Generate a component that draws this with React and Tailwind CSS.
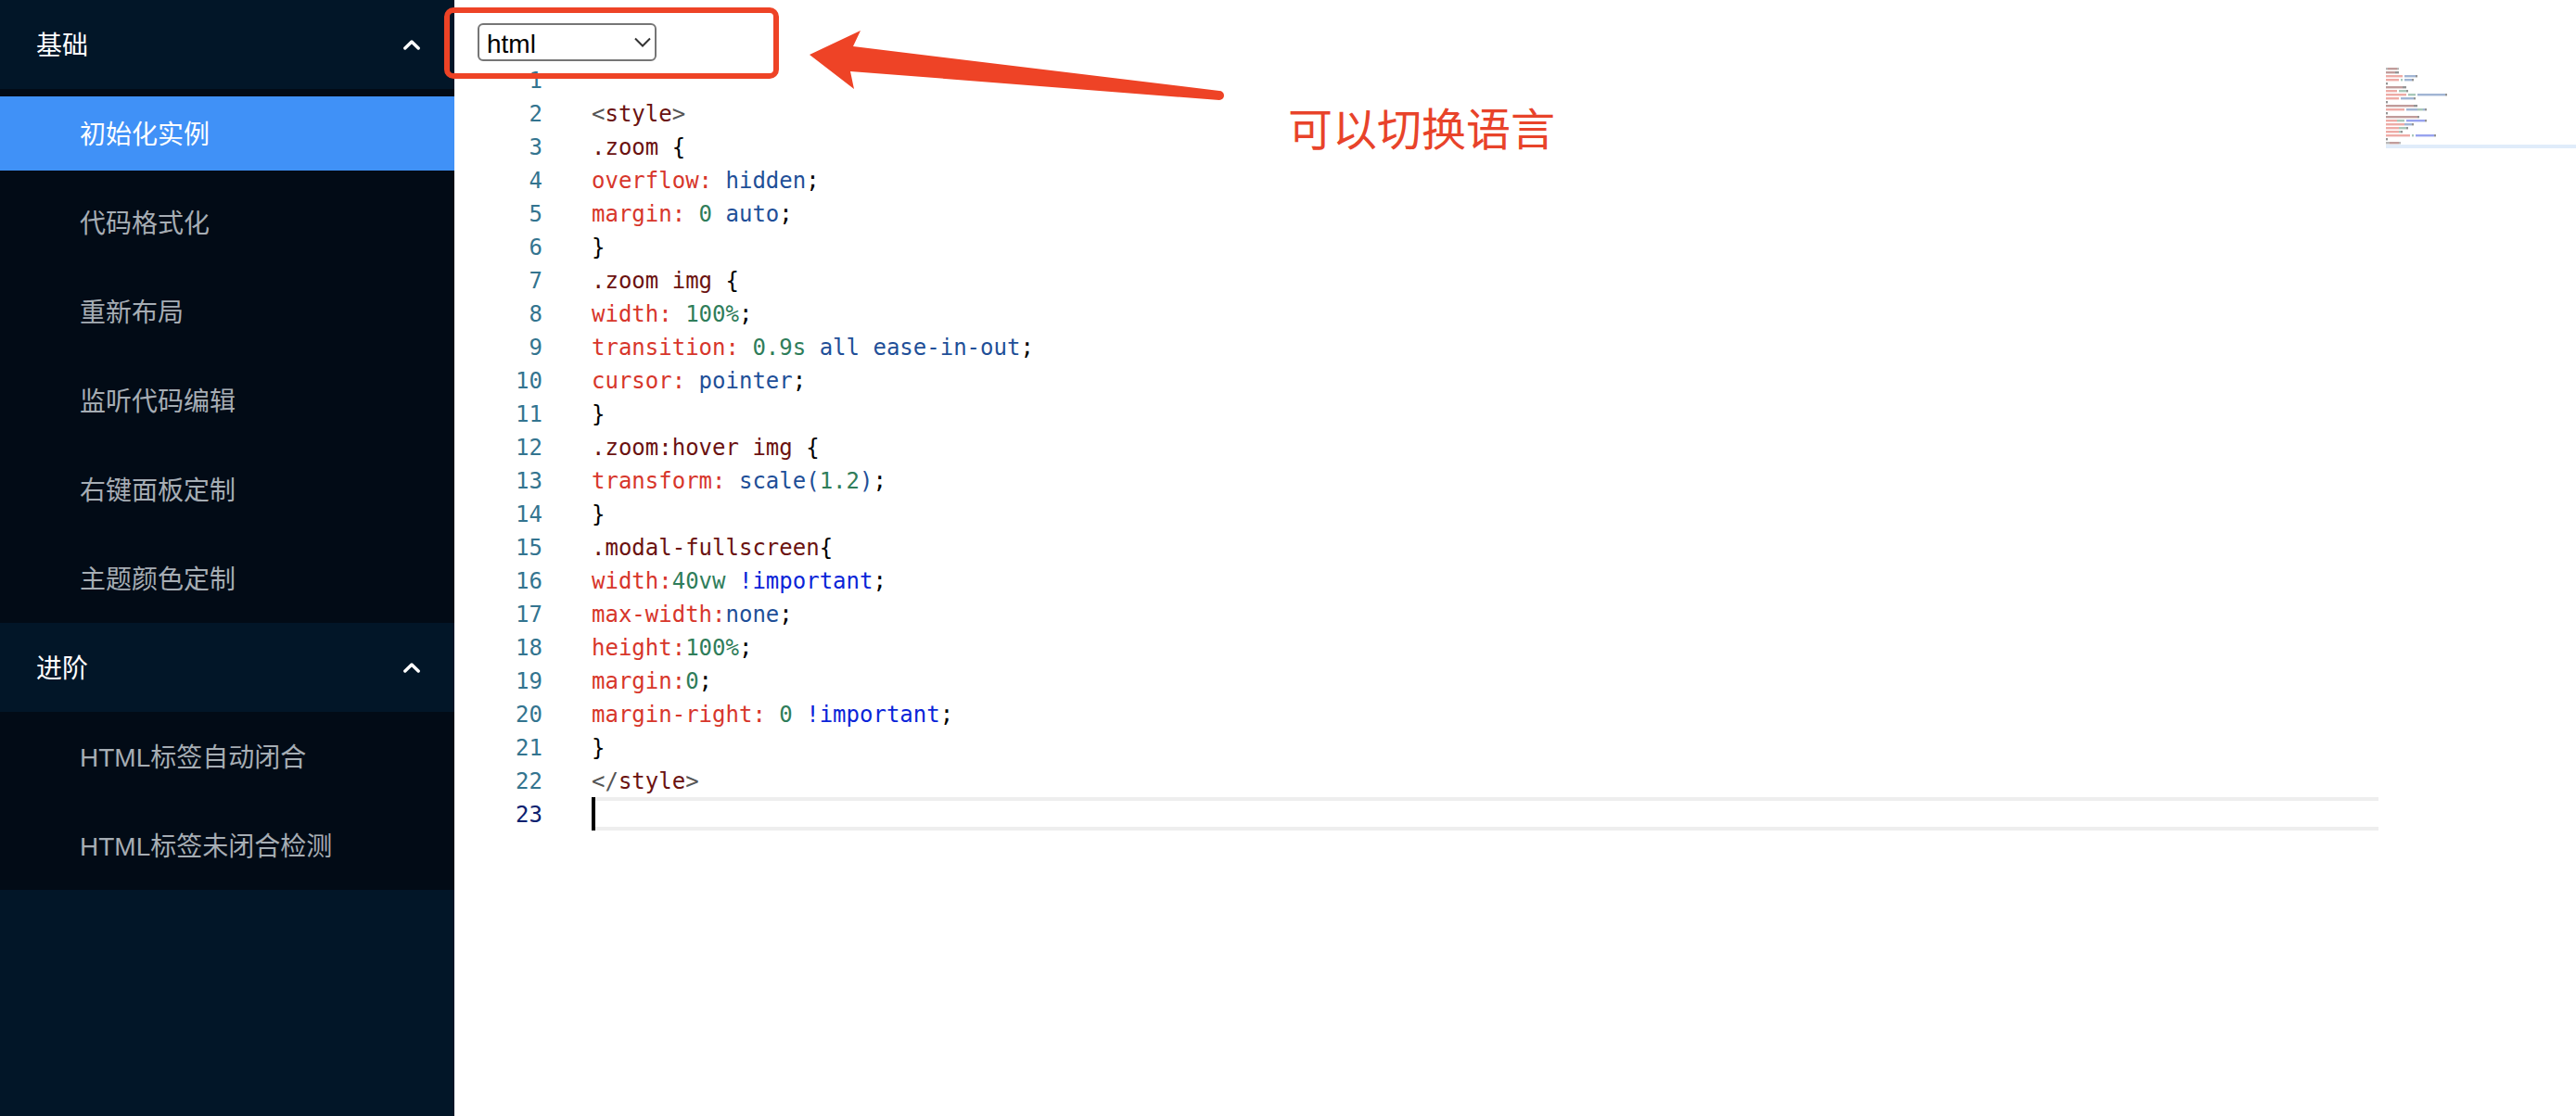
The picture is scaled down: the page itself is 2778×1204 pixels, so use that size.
const R = "text-[#d7362b]";
const B = "text-[#1f4f98]";
const G = "text-[#2f7d5a]";
const D = "text-[#6b1210]";
const K = "text-[#000000]";
const I = "text-[#0a24d8]";
const A = "text-[#555555]";

// same colours again for the minimap bars
const miniColors = {
  [R]: "#d7362b",
  [B]: "#1f4f98",
  [G]: "#2f7d5a",
  [D]: "#6b1210",
  [K]: "#000000",
  [I]: "#0a24d8",
  [A]: "#555555",
};

const codeLines = [
  [],
  [[A, "<"], [D, "style"], [A, ">"]],
  [[D, ".zoom"], [K, " {"]],
  [[R, "overflow:"], [K, " "], [B, "hidden"], [K, ";"]],
  [[R, "margin:"], [K, " "], [G, "0"], [K, " "], [B, "auto"], [K, ";"]],
  [[K, "}"]],
  [[D, ".zoom img"], [K, " {"]],
  [[R, "width:"], [K, " "], [G, "100%"], [K, ";"]],
  [[R, "transition:"], [K, " "], [G, "0.9s"], [K, " "], [B, "all ease-in-out"], [K, ";"]],
  [[R, "cursor:"], [K, " "], [B, "pointer"], [K, ";"]],
  [[K, "}"]],
  [[D, ".zoom:hover img"], [K, " {"]],
  [[R, "transform:"], [K, " "], [B, "scale("], [G, "1.2"], [B, ")"], [K, ";"]],
  [[K, "}"]],
  [[D, ".modal-fullscreen"], [K, "{"]],
  [[R, "width:"], [G, "40vw"], [K, " "], [I, "!important"], [K, ";"]],
  [[R, "max-width:"], [B, "none"], [K, ";"]],
  [[R, "height:"], [G, "100%"], [K, ";"]],
  [[R, "margin:"], [G, "0"], [K, ";"]],
  [[R, "margin-right:"], [K, " "], [G, "0"], [K, " "], [I, "!important"], [K, ";"]],
  [[K, "}"]],
  [[A, "</"], [D, "style"], [A, ">"]],
  [],
];

const menus = [
  {
    title: "基础",
    items: ["初始化实例", "代码格式化", "重新布局", "监听代码编辑", "右键面板定制", "主题颜色定制"],
  },
  {
    title: "进阶",
    items: ["HTML标签自动闭合", "HTML标签未闭合检测"],
  },
];

const Sidebar = () => (
  <aside className="w-[490px] shrink-0 bg-[#021628] text-[28px] font-['Liberation_Sans','Noto_Sans_CJK_SC',sans-serif]">
    {menus.map((menu) => (
      <div key={menu.title}>
        <div className="h-[96px] pl-[39px] pr-[37px] flex items-center justify-between text-white">
          <span className="pt-[3px]">{menu.title}</span>
          <svg width="18" height="11" viewBox="0 0 18 11" fill="none">
            <path d="M1.8 9 9 2l7.2 7" stroke="#fff" strokeWidth="3.4" strokeLinecap="round" strokeLinejoin="round" />
          </svg>
        </div>
        <ul className="bg-[#020b16] py-[8px] flex flex-col gap-[16px]">
          {menu.items.map((item) => (
            <li
              key={item}
              className={`h-[80px] pl-[86px] pt-[3px] flex items-center ${
                item === "初始化实例" ? "bg-[#4091f7] text-white" : "text-[#a6adb4]"
              }`}
            >
              {item}
            </li>
          ))}
        </ul>
      </div>
    ))}
  </aside>
);

const Minimap = () => (
  <div className="w-[213px] shrink-0 relative">
    <svg width="213" height="92" viewBox="0 0 213 92" className="block">
      {codeLines.map((line, i) => {
        let col = 0;
        return line.map(([color, text], j) => {
          const x = 8 + col * 2;
          col += text.length;
          if (!text.trim()) return null;
          return (
            <rect key={`${i}-${j}`} x={x} y={i * 4 + 1} width={text.length * 2} height="2.4" fill={miniColors[color]} opacity="0.42" />
          );
        });
      })}
      <rect x="8" y="88" width="205" height="4" fill="#e0ecfa" />
    </svg>
  </div>
);

const Editor = () => (
  <div className="flex font-['DejaVu_Sans_Mono',monospace] text-[24px] leading-[38px]">
    <div className="w-[95px] shrink-0 text-right text-[#33748f]">
      {codeLines.map((_, i) => (
        <div key={i} className={`h-[36px] ${i === 22 ? "text-[#0b216f]" : ""}`}>
          {i + 1}
        </div>
      ))}
    </div>
    <div className="w-[1980px] shrink-0 pl-[53px]">
      {codeLines.map((line, i) =>
        i === 22 ? (
          <div key={i} className="h-[36px] border-y-4 border-[#eeeeee] relative">
            <span className="absolute left-0 top-[-4px] w-[4px] h-[36px] bg-black" />
          </div>
        ) : (
          <div key={i} className="h-[36px] whitespace-pre">
            {line.map(([color, text], j) => (
              <span key={j} className={color}>
                {text}
              </span>
            ))}
          </div>
        )
      )}
    </div>
    <Minimap />
  </div>
);

const LanguageSelect = () => (
  <div className="relative w-[193px] h-[41px]">
    <select
      defaultValue="html"
      className="appearance-none w-full h-full bg-white border-2 border-[#767676] rounded-[6px] pl-[8px] pt-[3px] text-[28px] leading-[36px] text-black font-['Liberation_Sans',sans-serif]"
    >
      <option value="html">html</option>
    </select>
    <svg className="absolute left-[168px] top-[15px]" width="20" height="11" viewBox="0 0 20 11" fill="none">
      <path d="M2 1.5 10 9.5l8-8" stroke="#333" strokeWidth="2" />
    </svg>
  </div>
);

export default function App() {
  return (
    <div className="relative flex w-[2778px] h-[1204px] overflow-hidden bg-white">
      <Sidebar />
      <main className="flex-1 min-w-0">
        <div className="h-[68px] pt-[25px] pl-[25px]">
          <LanguageSelect />
        </div>
        <Editor />
      </main>

      {/* 截图上的红色标注 */}
      <div className="absolute left-[479px] top-[8px] w-[361px] h-[77px] border-[6px] border-[#ee4326] rounded-[10px]" />
      <svg className="absolute left-[870px] top-[30px]" width="455" height="85" viewBox="0 0 455 85">
        <path
          d="M3 29 58 3 50 20 445 68a5 5 0 0 1 0 10L47 47 51 66Z"
          fill="#ee4326"
        />
      </svg>
      <div className="absolute left-[1389px] top-[101px] text-[48px] leading-[70px] text-[#e8432a] font-['Noto_Sans_CJK_SC',sans-serif]">
        可以切换语言
      </div>
    </div>
  );
}
